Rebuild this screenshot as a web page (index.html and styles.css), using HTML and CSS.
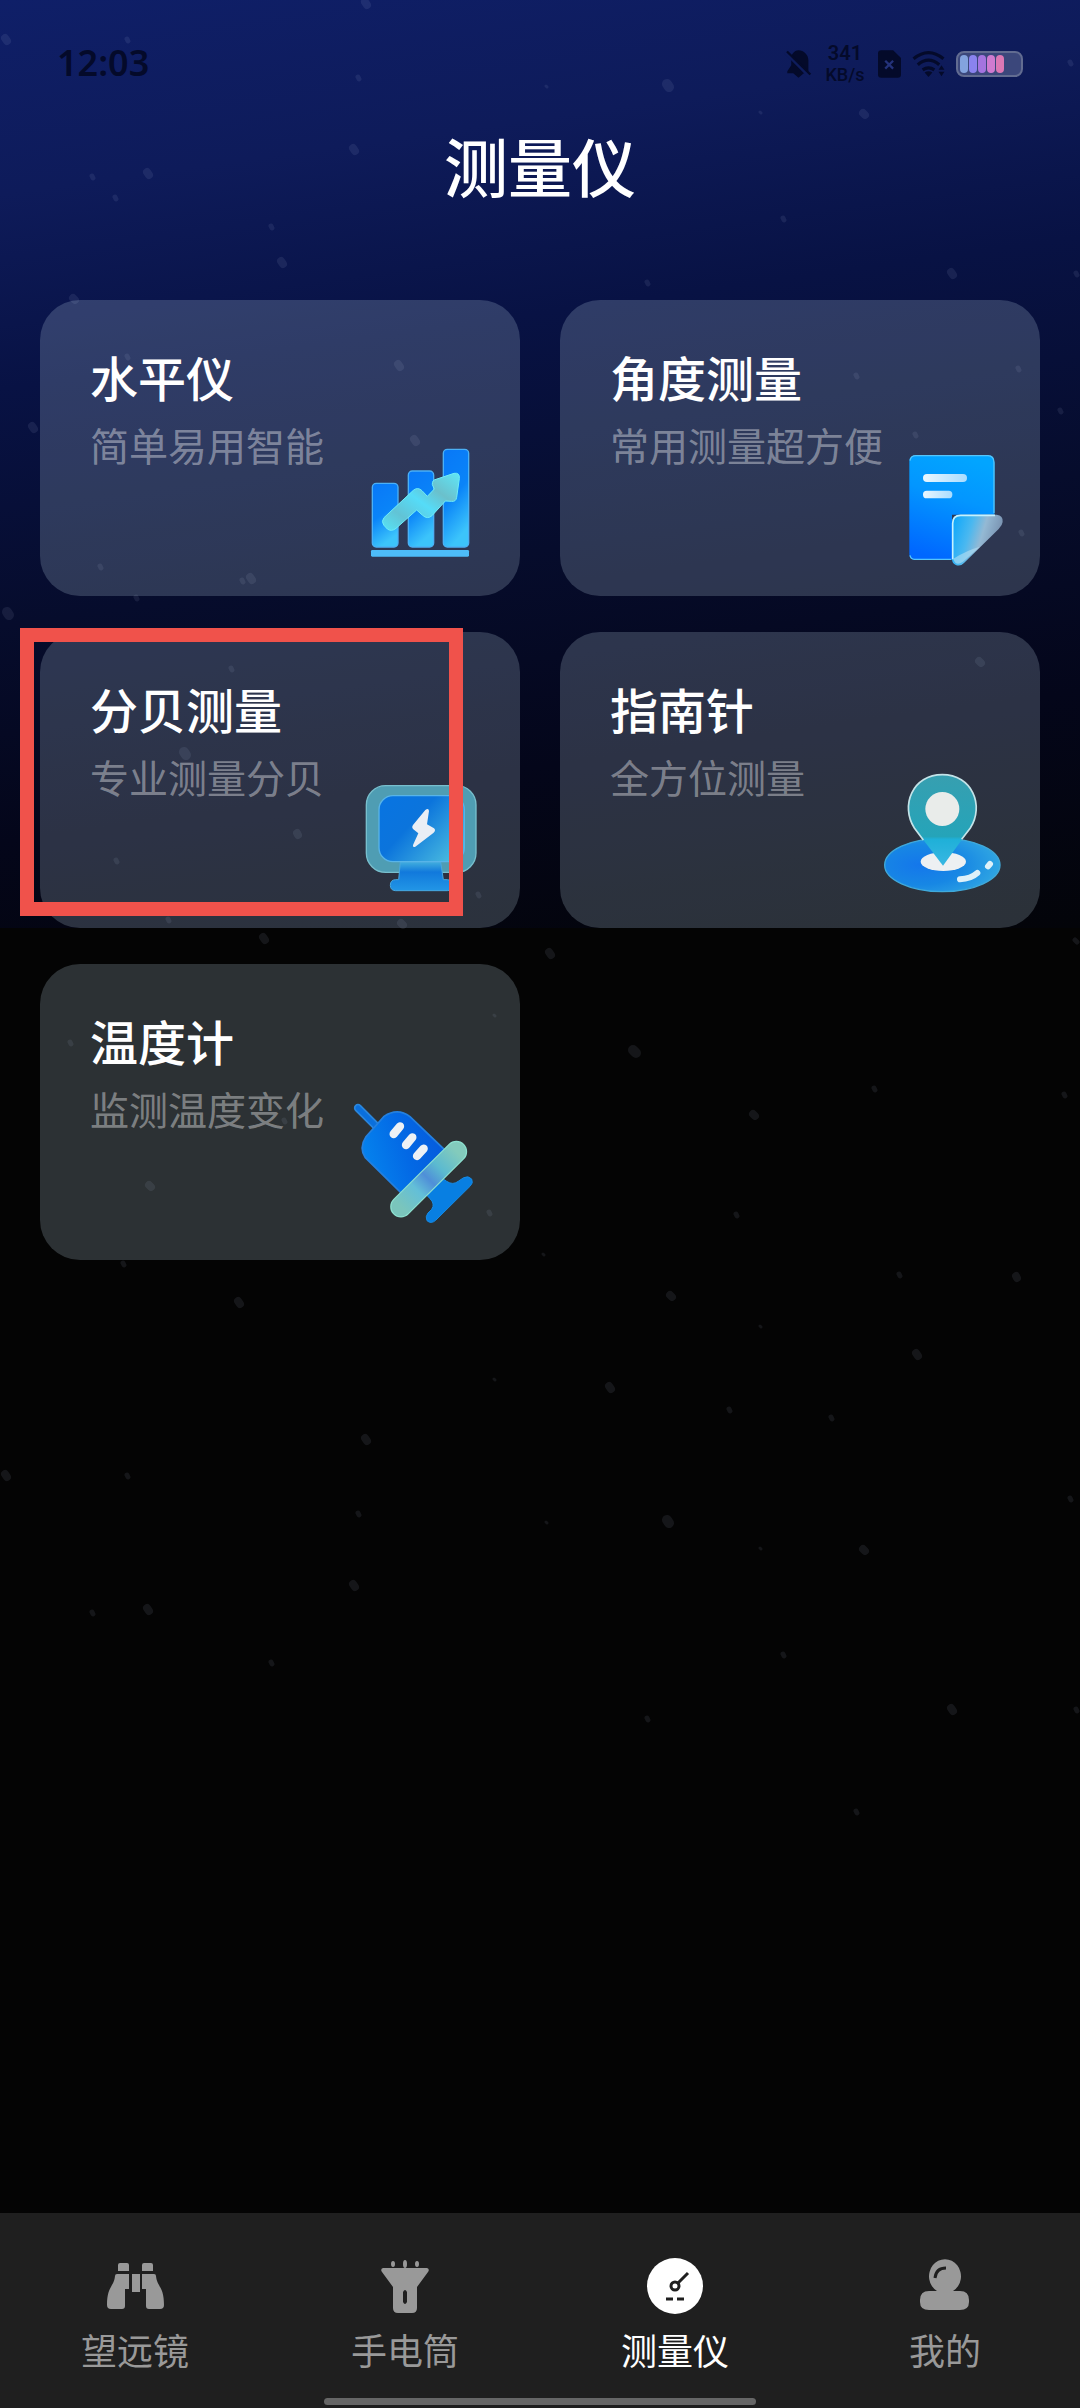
FILE: index.html
```html
<!DOCTYPE html>
<html lang="zh-CN">
<head>
<meta charset="utf-8">
<meta name="viewport" content="width=device-width, initial-scale=1">
<title>测量仪</title>
<link rel="stylesheet" href="styles.css">
</head>
<body>
<svg class="stars" viewBox="0 0 1080 2408" preserveAspectRatio="xMidYMin slice" aria-hidden="true">
  <defs>
    <g id="field">
      <path stroke-width="3" d="M543 1254l1 1M760 1326l1 1M494 1379l1 1M546 1522l1 1M760 1548l1 1M494 1015l1 1"/>
      <path stroke-width="5" d="M874 1088l1 2M1064 1094l1 2M1075 940l2 2M736 1214l1 2M123 1263l1 2M899 1274l1 2M729 1409l1 2M831 1417l1 2M127 1475l1 2M358 1513l1 2M1070 1498l1 2M92 1612l1 2M271 1662l1 2M783 1654l1 2M1076 1709l1 2M647 1718l1 2M856 1811l1 2M70 1042l1 2M489 1212l1 2M284 1120l1 2"/>
      <path stroke-width="8" d="M753 1114l2 2M1016 1276l1 2M670 1295l2 2M238 1301l2 3M263 937l2 3M549 952l2 3M916 1353l2 3M609 1386l2 3M365 1438l2 3M5 1474l2 3M863 1549l2 2M353 1584l2 3M147 1608l2 3M951 1708l2 3M149 1185l2 2"/>
      <path stroke-width="10" d="M633 1050l3 3M667 1520l2 3"/>
    </g>
  </defs>
  <use href="#field"/>
  <use href="#field" y="-1436"/>
  <path stroke-width="5" d="M115 197l1 2M100 566l1 2M242 580l1 2M136 597l1 2M127 356l1 2M231 668l1 2M116 860l1 2M478 894l1 2M168 919l1 2M1021 532l1 2M1018 368l1 2M1060 410l1 2M915 434l1 2"/>
  <path stroke-width="8" d="M281 261l2 3M73 298l2 2M32 426l2 3M398 364l2 3M414 439l2 3M250 577l2 3M297 833l1 2M401 923l2 2M979 661l2 2"/>
  <path stroke-width="10" d="M7 612l2 3M184 752l2 3"/>
</svg>

<div class="statusbar">
  <span class="clock">12:03</span>
  <div class="indicators">
    <svg class="bell" viewBox="0 0 76 84" aria-hidden="true">
      <path d="M38 0C24 1 16 12 16 26V46L4 64V70H22L38 84L54 70H62L68 64V30C68 14 54 0 38 0Z"/>
      <path class="slash" d="M0 8L72 80"/><path class="strike" d="M3 4L74 74"/>
    </svg>
    <span class="speed"><b>341</b><span>KB/s</span></span>
    <svg class="sim" viewBox="0 0 70 84" aria-hidden="true">
      <path d="M10 0H46L70 24V74Q70 84 60 84H10Q0 84 0 74V10Q0 0 10 0Z"/>
      <path class="cross" d="M22 32L46 56M46 32L22 56"/>
    </svg>
    <svg class="wifi" viewBox="0 0 100 80" aria-hidden="true">
      <path class="arc" d="M4 24Q50-14 96 24M17 42Q50 14 83 42M32 58Q50 46 68 58"/>
      <path d="M38 66Q50 58 62 66L50 80ZM81 58L90 44L99 58ZM81 64H99L90 78Z"/>
    </svg>
    <div class="battery"><i></i><i></i><i></i><i></i><i></i></div>
  </div>
</div>

<h1>测量仪</h1>

<main class="tools">
  <a class="card" href="#level">
    <div class="info"><h2>水平仪</h2><p>简单易用智能</p></div>
    <svg class="art" viewBox="36 60 408 408" aria-hidden="true">
      <defs>
        <linearGradient id="bar" x1="0" y1="0" x2="0.3" y2="1"><stop offset="0" stop-color="#0878f8"/><stop offset=".55" stop-color="#0a84f8"/><stop offset="1" stop-color="#3cc4fb"/></linearGradient>
        <linearGradient id="trend" x1="0" y1="1" x2="1" y2="0"><stop offset="0" stop-color="#55e4f6"/><stop offset=".25" stop-color="#62c3d5"/><stop offset=".5" stop-color="#55dcf8"/><stop offset=".7" stop-color="#6bc0cb"/><stop offset="1" stop-color="#5ee6f8"/></linearGradient>
      </defs>
      <g fill="url(#bar)" stroke="#4bb0f5" stroke-width="4">
        <rect x="97" y="190" width="77" height="191" rx="12"/>
        <rect x="205" y="153" width="76" height="228" rx="12"/>
        <rect x="310" y="88" width="76" height="293" rx="12"/>
      </g>
      <rect x="93" y="390" width="294" height="20" rx="4" fill="#4dbcf8"/>
      <path d="M132 293L220 211Q233 200 246 212L262 229L283 207L277 194Q276 180 288 178L342 160Q360 157 358 176L350 232Q348 246 334 244L316 243L276 287Q262 299 248 286L230 270L168 325Q154 336 142 327L131 315Q123 304 132 293Z" fill="url(#trend)" stroke="#70edf8" stroke-width="3"/>
    </svg>
  </a>

  <a class="card" href="#angle">
    <div class="info"><h2>角度测量</h2><p>常用测量超方便</p></div>
    <svg class="art" viewBox="-24 30 408 408" aria-hidden="true">
      <defs>
        <linearGradient id="sheet" x1="0.6" y1="0" x2="0.35" y2="1"><stop offset="0" stop-color="#02a5ff"/><stop offset=".4" stop-color="#0396ff"/><stop offset="1" stop-color="#0067ff"/></linearGradient>
        <linearGradient id="fold" x1="0" y1=".2" x2="1" y2=".5"><stop offset="0" stop-color="#0fa8fb"/><stop offset=".35" stop-color="#4ab8f0"/><stop offset=".6" stop-color="#94b9d4"/><stop offset="1" stop-color="#7389a8"/></linearGradient>
        <linearGradient id="line"><stop offset="0" stop-color="#eaf7ff"/><stop offset="1" stop-color="#a9dcff"/></linearGradient>
      </defs>
      <path d="M108 76H324Q343 76 343 96V254H216V389H104Q88 389 88 372V94Q88 76 108 76Z" fill="url(#sheet)"/>
      <path d="M90 92Q92 77 108 77H324Q342 78 342 98V250M90 376Q92 387 103 388H214" fill="none" stroke="#55c5fa" stroke-width="4"/>
      <rect x="129" y="132" width="132" height="24" rx="12" fill="url(#line)"/>
      <rect x="129" y="182" width="88" height="23" rx="11" fill="url(#line)"/>
      <path d="M240 254H350Q370 256 368 276Q367 286 356 297L252 399Q240 411 226 404Q216 399 216 386V278Q216 255 240 254Z" fill="url(#fold)"/>
      <path d="M218 388V280Q218 256 242 256H345" fill="none" stroke="#c5f1ff" stroke-width="5"/>
      <path d="M220 386Q226 410 248 396L300 350Q262 360 220 386Z" fill="#b5dff4" opacity=".6"/>
    </svg>
  </a>

  <a class="card" href="#decibel">
    <div class="info"><h2>分贝测量</h2><p>专业测量分贝</p></div>
    <svg class="art" viewBox="36 36 408 408" aria-hidden="true">
      <defs>
        <linearGradient id="screen" x1="0" y1="0" x2="1" y2=".7"><stop offset="0" stop-color="#0874e2"/><stop offset=".45" stop-color="#0b74dc"/><stop offset="1" stop-color="#46b7df"/></linearGradient>
        <linearGradient id="stand" x1="0" y1="0" x2="0" y2="1"><stop offset="0" stop-color="#41aede"/><stop offset=".35" stop-color="#1179dc"/><stop offset="1" stop-color="#2296e6"/></linearGradient>
      </defs>
      <rect x="79" y="77" width="329" height="260" rx="58" fill="#4f9db3" stroke="#78bfcd" stroke-width="4"/>
      <path d="M181 306H302L310 359H322Q340 361 340 376Q340 392 322 392H166Q151 391 151 376Q151 360 166 359H176Z" fill="url(#stand)" stroke="#48a8e0" stroke-width="3"/>
      <rect x="117" y="107" width="256" height="198" rx="42" fill="url(#screen)" stroke="#58b4e8" stroke-width="4"/>
      <path d="M256 150Q266 143 267 153L261 193L282 205Q289 211 280 219L226 260Q216 263 220 253L235 220L220 208Q214 202 219 195Z" fill="#e9eef5"/>
    </svg>
    <span class="marker" aria-hidden="true"></span>
  </a>

  <a class="card" href="#compass">
    <div class="info"><h2>指南针</h2><p>全方位测量</p></div>
    <svg class="art" viewBox="36 66 408 408" aria-hidden="true">
      <defs>
        <radialGradient id="disc" cx=".3" cy=".5" r=".75"><stop offset="0" stop-color="#1477eb"/><stop offset=".5" stop-color="#1787e4"/><stop offset="1" stop-color="#33aae2"/></radialGradient>
        <linearGradient id="pin" x1="0" y1="0" x2="0" y2="1"><stop offset="0" stop-color="#379fb0"/><stop offset=".68" stop-color="#25a4b9"/><stop offset=".71" stop-color="#1fb0d8"/><stop offset="1" stop-color="#38b7e3"/></linearGradient>
      </defs>
      <ellipse cx="247" cy="345" rx="173" ry="80" fill="url(#disc)" stroke="#40a9da" stroke-width="4"/>
      <ellipse cx="250" cy="335" rx="68" ry="28" fill="#edf0f2"/>
      <path d="M249 347L163 234C120 166 158 74 247 74C336 74 374 166 331 234Z" fill="url(#pin)"/>
      <path d="M190 270L163 234C120 166 158 74 247 74C336 74 374 166 331 234L305 268" fill="none" stroke="#c4e3e8" stroke-width="5"/>
      <circle cx="247" cy="177" r="51" fill="#e9ecea"/>
      <path d="M300 388Q333 386 352 369M384 349L390 342" fill="none" stroke="#def1f9" stroke-width="18" stroke-linecap="round"/>
    </svg>
  </a>

  <a class="card" href="#thermometer">
    <div class="info"><h2>温度计</h2><p>监测温度变化</p></div>
    <svg class="art" viewBox="66 72 408 408" aria-hidden="true">
      <defs>
        <linearGradient id="tube" x1="0" y1=".6" x2="1" y2=".3"><stop offset="0" stop-color="#0584ee"/><stop offset=".5" stop-color="#0369e5"/><stop offset="1" stop-color="#0658da"/></linearGradient>
        <linearGradient id="flange" x1="0" y1="1" x2="1" y2="0"><stop offset="0" stop-color="#7ac5bc"/><stop offset=".3" stop-color="#63bfd8"/><stop offset=".5" stop-color="#4f8fd8"/><stop offset=".7" stop-color="#5bbad0"/><stop offset="1" stop-color="#83cbbc"/></linearGradient>
      </defs>
      <path d="M84 84L146 146" stroke="#2a86dc" stroke-width="25" stroke-linecap="round"/>
      <path d="M84 84L146 146" stroke="#0a6fdc" stroke-width="15" stroke-linecap="round"/>
      <path d="M330 290L350 304Q369 317 386 303L401 293Q415 286 425 297Q431 309 420 319L317 421Q303 433 291 422Q285 410 294 399L305 388Q316 372 300 356L285 340Z" fill="#087fe2" stroke="#168ae3" stroke-width="3"/>
      <path d="M162 109Q203 82 240 110L355 220L220 345L106 233Q86 204 108 170Z" fill="url(#tube)" stroke="#2480df" stroke-width="5"/>
      <path d="M191 162L210 139M228 195L247 172M261 228L281 206" stroke="#edf1f5" stroke-width="25" stroke-linecap="round"/>
      <path d="M213 380L379 215" stroke="#8ce0cf" stroke-width="65" stroke-linecap="round"/>
      <path d="M213 380L379 215" stroke="url(#flange)" stroke-width="58" stroke-linecap="round"/>
    </svg>
  </a>
</main>

<nav class="tabbar">
  <a href="#telescope">
    <svg viewBox="0 0 64 64" aria-hidden="true"><path d="M17 9H24Q26 9 26 11V17H15V11Q15 9 17 9ZM41 9H48Q50 9 50 11V17H39V11Q39 9 41 9ZM29 20H37V38H29ZM14 20H26V35H22V52Q22 55 19 55H8Q4 55 4 51C4 32 11 33 12 22Q12 20 14 20ZM39 20H51Q53 20 53 22C54 33 61 32 61 51Q61 55 57 55H46Q43 55 43 52V35H39Z"/></svg>
    <span>望远镜</span>
  </a>
  <a href="#torch">
    <svg viewBox="0 0 64 64" aria-hidden="true"><path fill-rule="evenodd" d="M10 14H54Q57 15 55 18L44 33V54Q44 59 39 59H25Q20 59 20 54V33L9 18Q7 15 10 14ZM30 38V48Q32 52 34 48V38Q32 34 30 38Z"/><ellipse cx="20" cy="10" rx="2" ry="3"/><ellipse cx="32" cy="10" rx="2" ry="4"/><ellipse cx="44" cy="10" rx="2" ry="3"/></svg>
    <span>手电筒</span>
  </a>
  <a class="active" href="#measure" aria-current="page">
    <svg viewBox="0 0 64 64" aria-hidden="true"><circle cx="32" cy="32" r="28"/><g class="ink"><circle cx="32" cy="32" r="4"/><path d="M35 29L45 19M23 45H30M34 45H41"/></g></svg>
    <span>测量仪</span>
  </a>
  <a href="#me">
    <svg viewBox="0 0 64 64" aria-hidden="true"><path d="M24 37A16 17 0 1 1 40 37H47Q56 37 56 46V48Q56 56 47 56H16Q7 56 7 48V46Q7 37 16 37Z"/><path class="shine" d="M22 24Q23 14 33 14"/></svg>
    <span>我的</span>
  </a>
  <div class="home-indicator"></div>
</nav>
</body>
</html>
```
FILE: styles.css
```css
* {
  box-sizing: border-box;
  margin: 0;
  padding: 0;
}

body {
  position: relative;
  min-height: 100vh;
  display: flex;
  flex-direction: column;
  color: #fff;
  font-family: "Noto Sans CJK SC", sans-serif;
  background: #040404 linear-gradient(172deg, #0f1f68 0%, #0e1b5a 18%, #081244 36%, #060c2c 58%, #04061a 78%, #030409 100%) no-repeat 0 0 / 100% 928px;
}

a {
  color: inherit;
  text-decoration: none;
}

.stars {
  position: absolute;
  inset: 0;
  width: 100%;
  height: 100%;
  z-index: -1;
  fill: none;
  stroke: rgba(200, 210, 245, 0.09);
  stroke-linecap: round;
}

/* Status bar */
.statusbar {
  height: 128px;
  padding: 0 57px;
  display: flex;
  align-items: center;
  justify-content: space-between;
  color: #040a2a;
  font-family: "Noto Sans", sans-serif;
}

.clock {
  font-size: 36px;
  font-weight: 600;
  line-height: 48px;
  padding-bottom: 2px;
}

.indicators {
  display: flex;
  align-items: center;
}

.indicators svg {
  fill: currentColor;
  overflow: visible;
}

.bell {
  width: 25px;
  height: 28px;
  margin-right: 14px;
}

.bell path {
  stroke: none;
}

.bell .slash {
  stroke: #0e1c5c;
  stroke-width: 10px;
}

.bell .strike {
  stroke: currentColor;
  stroke-width: 7px;
}

.speed {
  width: 40px;
  margin-right: 13px;
  display: flex;
  flex-direction: column;
  align-items: center;
  font-family: Roboto, sans-serif;
  font-size: 20px;
  line-height: 22px;
}

.speed b {
  font-weight: 600;
}

.speed span {
  font-size: 18px;
  font-weight: 500;
}

.sim {
  width: 23px;
  height: 28px;
  margin-right: 11px;
}

.sim .cross {
  stroke: #24327a;
  stroke-width: 7px;
}

.wifi {
  width: 33px;
  height: 26px;
  margin-right: 11px;
}

.wifi .arc {
  fill: none;
  stroke: currentColor;
  stroke-width: 10px;
}

.battery {
  width: 67px;
  height: 26px;
  padding: 2px;
  display: flex;
  gap: 1px;
  border: 2px solid #626c91;
  border-radius: 8px;
  background: #3b477b;
}

.battery i {
  width: 8px;
  border-radius: 4px;
  background: #83a3de;
}

.battery i:nth-child(2) { background: #8a83ee; }
.battery i:nth-child(3) { background: #a474df; }
.battery i:nth-child(4) { background: #cf7bd0; }
.battery i:nth-child(5) { background: #db78b4; }

h1 {
  font-size: 64px;
  font-weight: 500;
  line-height: 72px;
  text-align: center;
}

/* Tool cards */
.tools {
  padding: 100px 40px 40px;
  display: grid;
  grid-template-columns: 1fr 1fr;
  gap: 36px 40px;
}

.card {
  position: relative;
  min-height: 296px;
  padding: 44px 32px 20px 50px;
  display: grid;
  border-radius: 40px;
  background: rgba(205, 230, 245, 0.2);
}

.info,
.art {
  grid-area: 1 / 1;
}

.card h2 {
  font-size: 48px;
  font-weight: 500;
  line-height: 64px;
}

.card p {
  margin-top: 8px;
  font-size: 39px;
  line-height: 56px;
  color: rgba(255, 255, 255, 0.4);
}

.art {
  width: 136px;
  height: 136px;
  place-self: end;
  fill: none;
  overflow: visible;
}

.marker {
  position: absolute;
  inset: -4px 57px 12px -20px;
  border: 14px solid #f0524b;
}

/* Bottom navigation */
.tabbar {
  position: sticky;
  bottom: 0;
  margin-top: auto;
  padding: 41px 0 3px;
  display: grid;
  grid-template-columns: repeat(4, 1fr);
  background: #1f1f1f;
  color: #999;
}

.tabbar a {
  display: flex;
  flex-direction: column;
  align-items: center;
  gap: 8px;
  font-size: 36px;
  line-height: 46px;
}

.tabbar svg {
  width: 64px;
  height: 64px;
  fill: currentColor;
}

.tabbar .active {
  color: #fff;
}

.ink,
.shine {
  stroke: #1f1f1f;
  stroke-width: 3px;
}

.ink {
  fill: #fff;
}

.tabbar .shine {
  fill: none;
}

.home-indicator {
  grid-column: 1 / -1;
  justify-self: center;
  width: 40%;
  height: 7px;
  margin-top: 26px;
  border-radius: 4px;
  background: #666;
}
```
